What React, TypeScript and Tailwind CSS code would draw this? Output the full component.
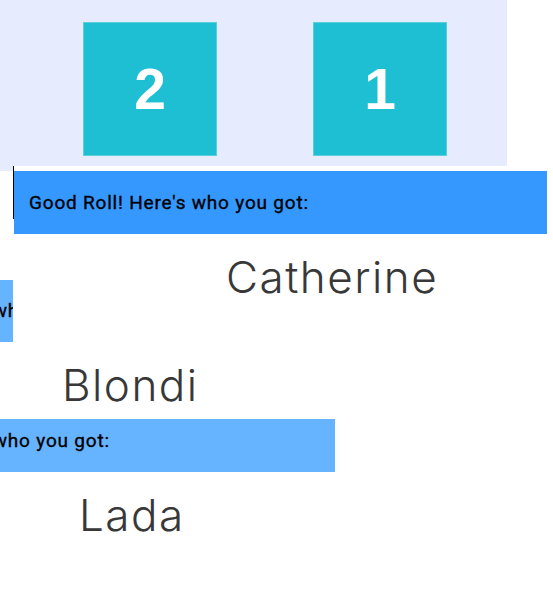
const HEADER = "Good Roll! Here's who you got:";

const Die = ({ value }: { value: number }) => (
  <div className="flex h-[134px] w-[134px] items-center justify-center border border-[#5ccfdd] bg-[#1fbfd3]">
    <span className="font-['Liberation_Sans',Arial,sans-serif] text-[57px] font-bold leading-none text-white">
      {value}
    </span>
  </div>
);

const Header = () => (
  <p className="whitespace-nowrap font-['Roboto',sans-serif] text-[19px] font-normal leading-none tracking-[0.8px] text-black [-webkit-text-stroke:0.35px_black]">
    {HEADER}
  </p>
);

// a card header that slid mostly off the left edge
const Peek = ({ width, height, padTop }: { width: string; height: string; padTop: string }) => (
  <div className={`overflow-hidden bg-[#66b3ff] ${width} ${height} ${padTop}`}>
    <div className="ml-[-170px]">
      <Header />
    </div>
  </div>
);

const Name = ({ children, className }: { children: string; className: string }) => (
  <p className={`font-['Inter',sans-serif] text-[44px] font-light leading-none tracking-[1.5px] text-[#383838] ${className}`}>
    {children}
  </p>
);

const App = () => {
  return (
    <div className="h-[595px] w-[553px] overflow-hidden bg-white">
      <div className="flex h-[166px] w-[507px] items-start gap-[96px] bg-[#e6ebfd] pl-[83px] pt-[22px]">
        <Die value={2} />
        <Die value={1} />
      </div>

      <div className="flex items-start">
        <div className="h-[5px] w-[13px] bg-[#e6ebfd]" />
        <div className="h-[53px] w-px bg-black" />
        <div className="mt-[5px] flex h-[63px] w-[533px] items-center bg-[#3498ff] pl-[15px]">
          <Header />
        </div>
      </div>

      <div className="flex items-start">
        <div className="mt-[46px]">
          <Peek width="w-[13px]" height="h-[62px]" padTop="pt-[21px]" />
        </div>
        <Name className="ml-[213px] mt-[21px]">Catherine</Name>
      </div>

      <Name className="ml-[62px] mt-[21px]">Blondi</Name>

      <div className="mt-[12px]">
        <Peek width="w-[335px]" height="h-[53px]" padTop="pt-[12px]" />
      </div>

      <Name className="ml-[79px] mt-[21px]">Lada</Name>
    </div>
  );
};

export default App;
